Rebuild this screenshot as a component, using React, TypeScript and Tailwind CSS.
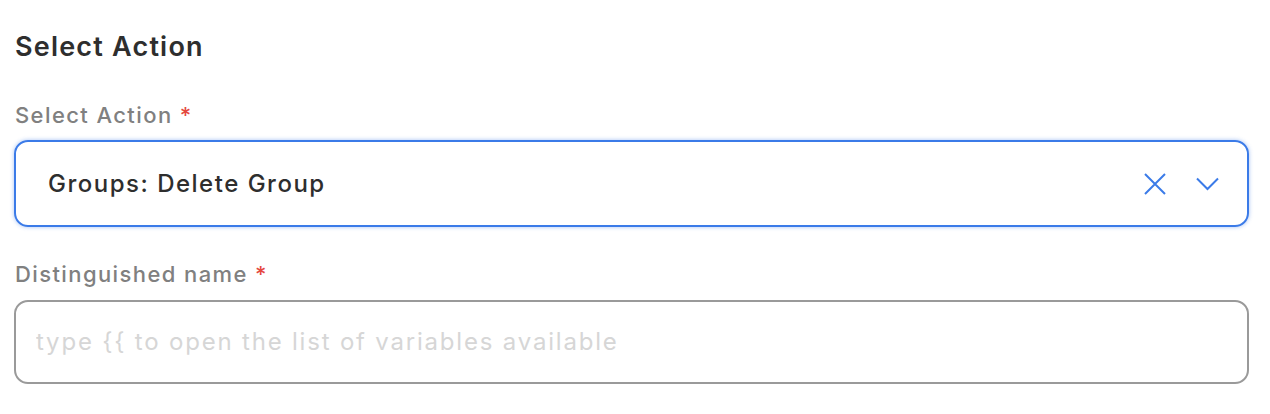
import React from 'react';

const FieldLabel = ({ text }: { text: string }) => (
  <label className="block text-[22px] font-medium leading-none text-[#808080] tracking-[1.4px]">
    {text} <span className="text-[#e5483f]">*</span>
  </label>
);

const App: React.FC = () => {
  return (
    <div className="min-h-[414px] bg-white pl-[14px] pr-[21px] pt-[33px] font-['Inter',sans-serif]">
      <h2 className="text-[27px] font-semibold leading-none text-[#2e2e2e] pl-[1px] tracking-[1.2px]">Select Action</h2>

      <div className="mt-[44px] pl-[1px]">
        <FieldLabel text="Select Action" />
      </div>
      <div className="mt-[14px] flex h-[87px] items-center rounded-[14px] border-2 border-[#3b7be8] pl-[32px] pr-[28px] shadow-[0_0_4px_rgba(59,123,232,0.45)]">
        <span className="flex-1 text-[24px] font-medium text-[#2e2e2e] tracking-[1.5px]">Groups: Delete Group</span>
        <button className="text-[#3b7be8]" aria-label="Clear">
          <svg width="22" height="22" viewBox="0 0 22 22" fill="none" stroke="currentColor" strokeWidth="2">
            <path d="M1 1L21 21M21 1L1 21" />
          </svg>
        </button>
        <button className="ml-[30px] text-[#3b7be8]" aria-label="Open">
          <svg width="23" height="14" viewBox="0 0 23 14" fill="none" stroke="currentColor" strokeWidth="2">
            <path d="M1 1.5L11.5 12L22 1.5" />
          </svg>
        </button>
      </div>

      <div className="mt-[36px] pl-[1px]">
        <FieldLabel text="Distinguished name" />
      </div>
      <div className="mt-[15px] flex h-[84px] items-center rounded-[14px] border-2 border-[#9a9a9a] px-[20px]">
        <input
          className="w-full bg-transparent text-[24px] text-[#2e2e2e] tracking-[1.8px] outline-none placeholder:text-[#d6d6d6]"
          placeholder="type {{ to open the list of variables available"
        />
      </div>
    </div>
  );
};

export default App;
